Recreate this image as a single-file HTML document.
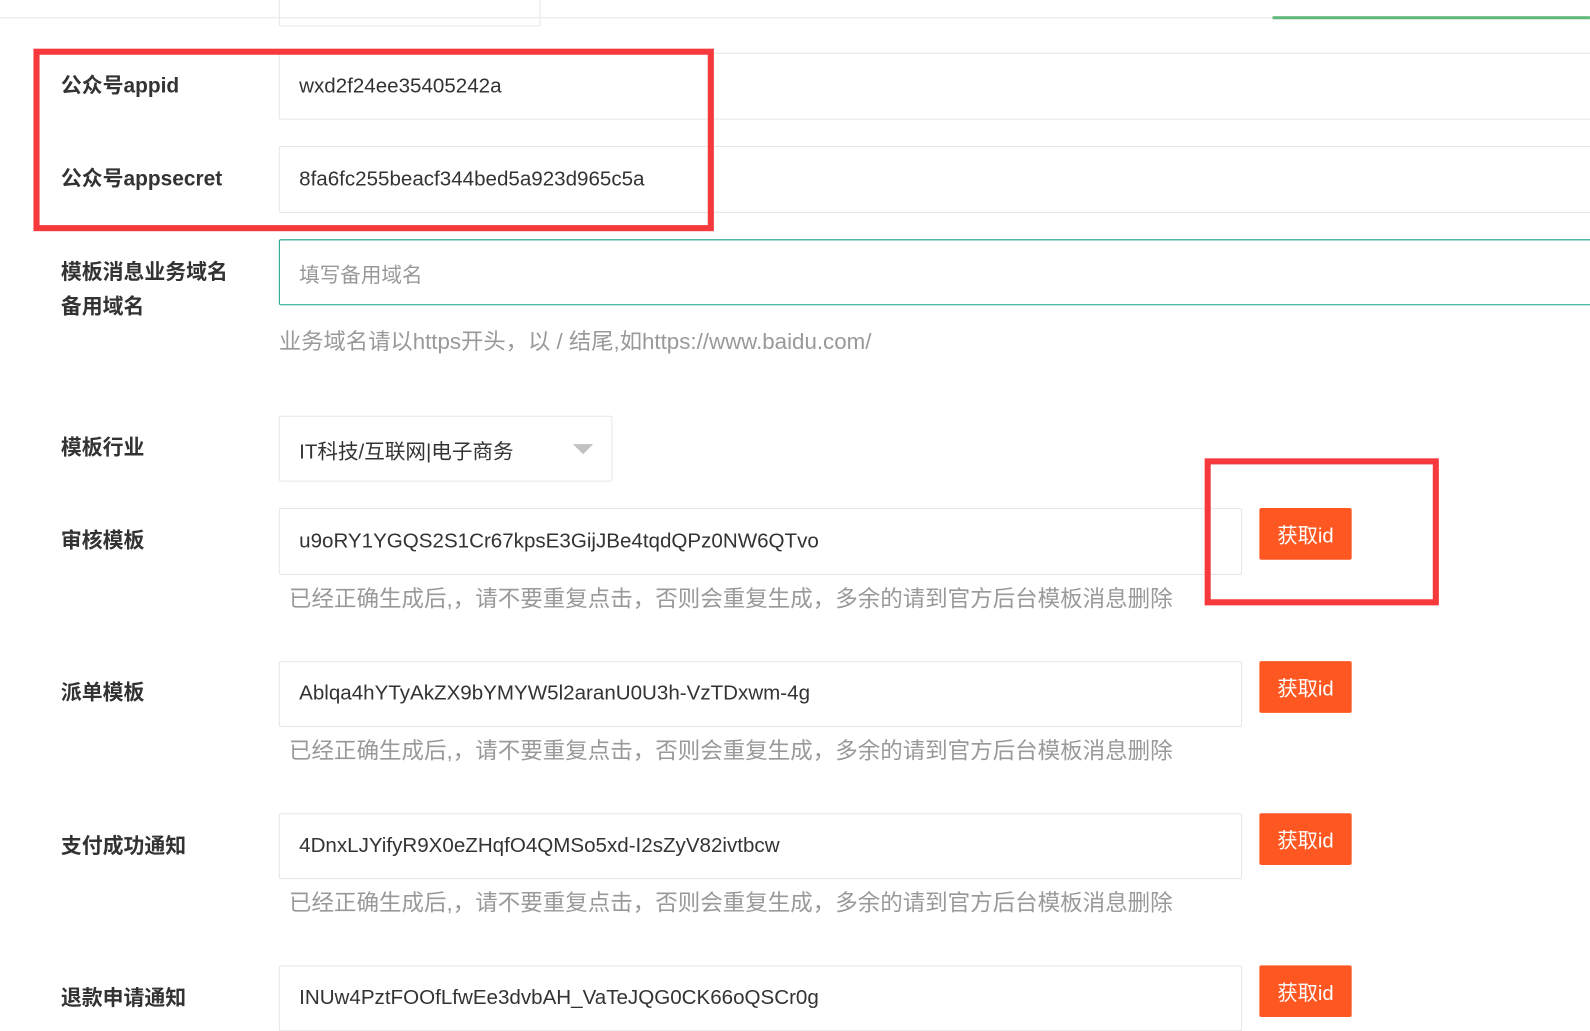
<!DOCTYPE html>
<html><head><meta charset="utf-8"><style>
html,body{margin:0;padding:0;width:1590px;height:1015px;overflow:hidden;background:#fff}
#w{position:absolute;left:0;top:0;width:1568px;height:1001px;transform:scale(1.014);transform-origin:0 0;font-family:"Liberation Sans","Noto Sans CJK SC",sans-serif}
.a{position:absolute}
.lbl{position:absolute;left:60px;font-size:20.6px;font-weight:bold;color:#333;line-height:34px}
.in{position:absolute;left:275px;border:1px solid #e6e6e6;border-radius:2px;box-sizing:border-box;font-size:20.3px;color:#333;padding-left:19px;display:flex;align-items:center;background:#fff}
.help{position:absolute;font-size:22.2px;color:#999;white-space:nowrap}
.btn{position:absolute;left:1242px;width:91px;height:51px;background:#ff5722;color:#fff;font-size:20px;border-radius:2px;display:flex;align-items:center;justify-content:center}
.red{position:absolute;border:6px solid #f5393c;box-sizing:border-box}
</style></head><body><div id="w">
<div class="a" style="left:0;top:17px;width:1568px;height:1px;background:#e6e6e6"></div>
<div class="a" style="left:1255px;top:16px;width:313px;height:3px;background:#5fb878"></div>
<div class="a" style="left:275px;top:-10px;width:258px;height:36px;border:1px solid #e6e6e6;border-radius:2px;box-sizing:border-box"></div>

<div class="lbl" style="top:68px">公众号appid</div>
<div class="in" style="top:52px;width:1320px;height:66px">wxd2f24ee35405242a</div>
<div class="lbl" style="top:160px">公众号appsecret</div>
<div class="in" style="top:144px;width:1320px;height:66px">8fa6fc255beacf344bed5a923d965c5a</div>
<div class="red" style="left:33px;top:48px;width:671px;height:180px"></div>

<div class="lbl" style="top:252px">模板消息业务域名<br>备用域名</div>
<div class="in" style="top:236px;width:1320px;height:65px;border-color:#16a08a;color:#999">填写备用域名</div>
<div class="help" style="left:275px;top:319px;font-size:22px">业务域名请以https开头，以 / 结尾,如https://www.baidu.com/</div>

<div class="lbl" style="top:425px">模板行业</div>
<div class="in" style="top:410px;width:329px;height:65px">IT科技/互联网|电子商务</div>
<div class="a" style="left:565px;top:438px;width:0;height:0;border-left:10px solid transparent;border-right:10px solid transparent;border-top:10px solid #c2c2c2"></div>

<div class="lbl" style="top:517px">审核模板</div>
<div class="in" style="top:501px;width:950px;height:66px">u9oRY1YGQS2S1Cr67kpsE3GijJBe4tqdQPz0NW6QTvo</div>
<div class="help" style="left:285px;top:573px">已经正确生成后,，请不要重复点击，否则会重复生成，多余的请到官方后台模板消息删除</div>
<div class="btn" style="top:501px">获取id</div>
<div class="red" style="left:1188px;top:452px;width:231px;height:145px"></div>

<div class="lbl" style="top:667px">派单模板</div>
<div class="in" style="top:652px;width:950px;height:65px">Ablqa4hYTyAkZX9bYMYW5l2aranU0U3h-VzTDxwm-4g</div>
<div class="help" style="left:285px;top:723px">已经正确生成后,，请不要重复点击，否则会重复生成，多余的请到官方后台模板消息删除</div>
<div class="btn" style="top:652px">获取id</div>

<div class="lbl" style="top:818px">支付成功通知</div>
<div class="in" style="top:802px;width:950px;height:65px">4DnxLJYifyR9X0eZHqfO4QMSo5xd-I2sZyV82ivtbcw</div>
<div class="help" style="left:285px;top:873px">已经正确生成后,，请不要重复点击，否则会重复生成，多余的请到官方后台模板消息删除</div>
<div class="btn" style="top:802px">获取id</div>

<div class="lbl" style="top:968px">退款申请通知</div>
<div class="in" style="top:952px;width:950px;height:65px">INUw4PztFOOfLfwEe3dvbAH_VaTeJQG0CK66oQSCr0g</div>
<div class="btn" style="top:952px">获取id</div>
</div></body></html>
